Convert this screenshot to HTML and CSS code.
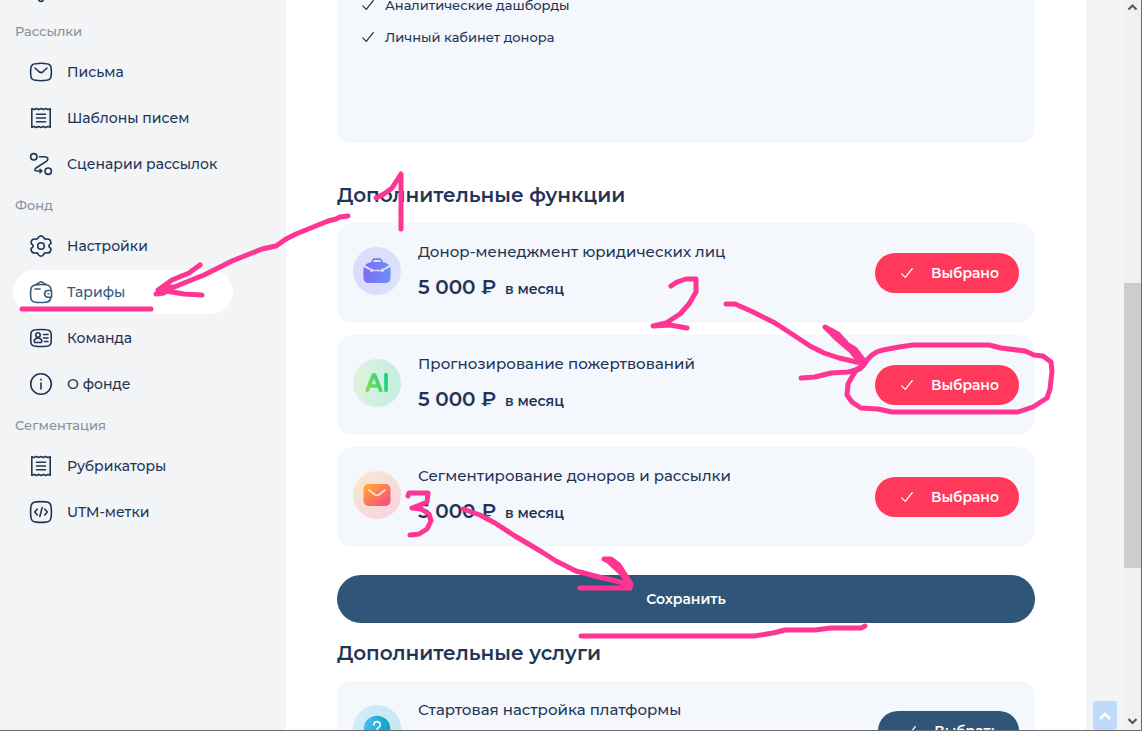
FILE: index.html
```html
<!DOCTYPE html>
<html lang="ru">
<head>
<meta charset="utf-8">
<title>Тарифы</title>
<link rel="stylesheet" href="styles.css">
</head>
<body>
<svg class="defs" aria-hidden="true">
  <defs>
    <linearGradient id="violet" gradientUnits="userSpaceOnUse" x1="11" y1="0" x2="37" y2="0"><stop offset="0" stop-color="#7b6ff5"/><stop offset="1" stop-color="#6e8df2"/></linearGradient>
    <linearGradient id="green" gradientUnits="userSpaceOnUse" x1="12" y1="30" x2="36" y2="20"><stop offset="0" stop-color="#8ede4a"/><stop offset="1" stop-color="#0cce86"/></linearGradient>
    <linearGradient id="orange" x1="0" y1="0" x2="1" y2="1"><stop offset="0" stop-color="#ffb02e"/><stop offset="1" stop-color="#fb4584"/></linearGradient>
    <linearGradient id="cyan" x1="0" y1="0" x2="1" y2="0"><stop offset="0" stop-color="#4cbcf0"/><stop offset="1" stop-color="#08a5c4"/></linearGradient>
    <symbol id="receipt" viewBox="0 0 24 24"><path d="M2.800 2.800v18.400M21.200 2.800v18.400M2.800 2.800l2.300.8 2.300-1 2.300 1 2.300-1 2.300 1 2.300-1 2.300 1 2.300-.8M2.800 21.200l2.300-.8 2.300 1 2.300-1 2.300 1 2.300-1 2.300 1 2.300-1 2.300.8M7.500 8.200h9M7.500 12h9M7.500 15.800h9"/></symbol>
    <symbol id="check" viewBox="0 0 16 16"><path d="M2 9l4 4 8-10"/></symbol>
  </defs>
</svg>
<div class="app">
  <nav class="sidebar">
    <svg class="icon icon-cut" viewBox="0 21 24 3" aria-hidden="true"><circle cx="12" cy="20" r="2.400"/></svg>

    <h2 class="nav-label">Рассылки</h2>
    <ul class="nav-list">
      <li><a class="nav-item" href="#"><svg class="icon" viewBox="0 0 24 24"><path d="M6.500 3.700Q12 2.800 17.500 3.700Q22 4 22.200 8.500Q22.600 12 22.200 15.500Q22 20 17.500 20.300Q12 21.200 6.500 20.300Q2 20 1.800 15.500Q1.400 12 1.800 8.500Q2 4 6.500 3.700zM6 8l4.300 4q1.700 1.200 3.400 0L18 8"/></svg>Письма</a></li>
      <li><a class="nav-item" href="#"><svg class="icon"><use href="#receipt"/></svg>Шаблоны писем</a></li>
      <li><a class="nav-item" href="#"><svg class="icon" viewBox="0 0 24 24"><circle cx="4.800" cy="4.800" r="3.200"/><circle cx="19.200" cy="19.200" r="3.200"/><path d="M10.500 4.800h5.500q4.500.8 2 4L7 16q-2.600 2.600.8 3H13M11 17.300L12.800 19 11 20.700"/></svg>Сценарии рассылок</a></li>
    </ul>

    <h2 class="nav-label">Фонд</h2>
    <ul class="nav-list">
      <li><a class="nav-item" href="#"><svg class="icon" viewBox="0 0 24 24"><circle cx="12" cy="12" r="3.300"/><path d="M9.500 3.300Q12 .4 14.500 3.300Q15.200 5.600 17.600 5Q21 4.500 21.800 7.700Q22.500 9.500 20.600 10.500Q19.200 12 20.600 13.500Q22.500 14.500 21.800 16.300Q21 19.500 17.600 19Q15.200 18.400 14.500 20.700Q12 23.600 9.500 20.700Q8.800 18.400 6.400 19Q3 19.500 2.200 16.300Q1.500 14.500 3.400 13.500Q4.800 12 3.400 10.500Q1.500 9.500 2.200 7.700Q3 4.500 6.400 5Q8.800 5.600 9.500 3.300z"/></svg>Настройки</a></li>
      <li><a class="nav-item nav-item-active" href="#" aria-current="page"><svg class="icon" viewBox="0 0 24 24"><path d="M22 10.500Q22 5 16.500 4.800Q12 4.200 6.500 5Q2 5.500 1.800 10Q1.300 14 1.800 17.500Q2.300 22 6.500 22.200Q12 22.800 17 22.200Q21 22 21.800 17.500M6.500 4.500Q9 4 10.200 2.500Q12 1 13.800 2.500Q15 4 17.500 4.500M6 9h5M22.500 10.500h-3.500q-3.300.2-3.500 3.200q.2 3.300 3.500 3.500h3.500zM19 13.800h.5"/></svg>Тарифы</a></li>
      <li><a class="nav-item" href="#"><svg class="icon" viewBox="0 0 24 24"><path d="M6.500 3.700Q12 3.200 17.500 3.700Q22 4 22.200 8.500V15.500Q22 20 17.500 20.300Q12 20.800 6.500 20.300Q2 20 1.800 15.500V8.500Q2 4 6.500 3.700zM14.500 8.500H19M14.500 12H19M15.500 15.500H19"/><circle cx="9" cy="9" r="2.200"/><path d="M6.500 12.800Q9 11.300 11.500 12.800Q14 15 12 16.500H6Q4 15 6.500 12.800z"/></svg>Команда</a></li>
      <li><a class="nav-item" href="#"><svg class="icon" viewBox="0 0 24 24"><circle cx="12" cy="12" r="10.300"/><path d="M12 11v6M12 7.300v.6"/></svg>О фонде</a></li>
    </ul>

    <h2 class="nav-label">Сегментация</h2>
    <ul class="nav-list">
      <li><a class="nav-item" href="#"><svg class="icon"><use href="#receipt"/></svg>Рубрикаторы</a></li>
      <li><a class="nav-item" href="#"><svg class="icon" viewBox="0 0 24 24"><path d="M7 1.900Q12 1.300 17 1.900Q21.800 2.200 22.100 7Q22.700 12 22.100 17Q21.800 21.800 17 22.100Q12 22.700 7 22.100Q2.200 21.800 1.900 17Q1.300 12 1.900 7Q2.200 2.200 7 1.900zM8.300 9L5.700 12l2.600 3M15.700 9l2.600 3-2.600 3M13.200 7.500l-2.400 9"/></svg>UTM-метки</a></li>
    </ul>
  </nav>

  <main class="content">
    <section class="plan">
      <ul class="features">
        <li class="feature"><svg class="check"><use href="#check"/></svg>Аналитические дашборды</li>
        <li class="feature"><svg class="check"><use href="#check"/></svg>Личный кабинет донора</li>
      </ul>
    </section>

    <h1 class="title">Дополнительные функции</h1>
    <div class="cards">
      <article class="card">
        <svg class="badge badge-violet" viewBox="0 0 48 48" aria-hidden="true"><path d="M10.500 20l7 3.500v1.500h2v-.8h9v.8h2v-1.500l7-3.500q.2 6 0 11q-.5 5-5 5h-17q-4.500 0-5-5q-.2-5 0-11z" fill="url(#violet)"/><path d="M12 18.300q4-3.300 7-3.300h10q3 0 7 3.300l-5.500 3.200h-2v1.200h-9v-1.200h-2z" fill="url(#violet)"/><path d="M19 15.500q.5-3.400 2.500-3.400h5q2 0 2.500 3.400" fill="none" stroke="url(#violet)" stroke-width="1.700"/></svg>
        <div class="info">
          <h3 class="name">Донор-менеджмент юридических лиц</h3>
          <p class="price">5 000 ₽ <span class="period">в месяц</span></p>
        </div>
        <button class="pick" type="button"><svg class="check"><use href="#check"/></svg>Выбрано</button>
      </article>
      <article class="card">
        <svg class="badge badge-green" viewBox="0 0 48 48" aria-hidden="true"><path d="M14.200 31.500L20 17q1-2.200 2 0l5.700 14.500M17 27h8M33 15.500v16" fill="none" stroke="url(#green)" stroke-width="3.600" stroke-linecap="round" stroke-linejoin="round"/></svg>
        <div class="info">
          <h3 class="name">Прогнозирование пожертвований</h3>
          <p class="price">5 000 ₽ <span class="period">в месяц</span></p>
        </div>
        <button class="pick" type="button"><svg class="check"><use href="#check"/></svg>Выбрано</button>
      </article>
      <article class="card">
        <svg class="badge badge-orange" viewBox="0 0 48 48" aria-hidden="true"><rect x="10.500" y="13" width="27" height="22" rx="5" fill="url(#orange)"/><path d="M16 19l6 4.800q2 1.200 4 0l6-4.800" fill="none" stroke="#ffe3da" stroke-width="1.800" stroke-linecap="round"/></svg>
        <div class="info">
          <h3 class="name">Сегментирование доноров и рассылки</h3>
          <p class="price">5 000 ₽ <span class="period">в месяц</span></p>
        </div>
        <button class="pick" type="button"><svg class="check"><use href="#check"/></svg>Выбрано</button>
      </article>
    </div>
    <button class="save" type="button">Сохранить</button>

    <h1 class="title title-services">Дополнительные услуги</h1>
    <div class="cards">
      <article class="card">
        <svg class="badge badge-cyan" viewBox="0 0 48 48" aria-hidden="true"><circle cx="24" cy="24" r="13.300" fill="url(#cyan)"/><path d="M20.800 20q.2-3.300 3.300-3.300q3 .1 3.100 3q0 1.700-1.700 2.800q-1.500 1-1.500 2.700M24 29.500v.5" fill="none" stroke="#e8fbff" stroke-width="1.700" stroke-linecap="round"/></svg>
        <div class="info">
          <h3 class="name">Стартовая настройка платформы</h3>
        </div>
        <button class="pick pick-off" type="button"><svg class="check"><use href="#check"/></svg>Выбрать</button>
      </article>
    </div>
  </main>

  <aside class="gutter">
    <button class="to-top" type="button" aria-label="Наверх"><svg viewBox="0 0 24 24"><path d="M7 15l5-5 5 5"/></svg></button>
  </aside>

  <div class="scrollbar" aria-hidden="true">
    <svg class="arrow" viewBox="0 0 17 17"><path d="M4.500 9.500l4-4 4 4"/></svg>
    <div class="track"><div class="thumb"></div></div>
    <svg class="arrow" viewBox="0 0 17 17"><path d="M4.500 6l4 4 4-4"/></svg>
  </div>

  <svg class="marks" viewBox="0 0 1142 731" aria-hidden="true">
    <path d="M376 198l8-4 8-6 9-14v55"/>
    <path d="M348 216l-8 1-4 2-8 2-32 13-10 5-10 7-14 3-30 12-28 14-20 8-12 5-8 5-8 1M200 265l-11 8-17 7-14 10 14-3M158 290l14 2 12 2 18 1"/>
    <path d="M22 309h129"/>
    <path d="M671 286l6-4 9-3h10v13l-7 12-9 10-14 9-13 3 17-1 17 3"/>
    <path d="M726 304h9l16 7 24 12 20 13 15 10 14 7 15 5 22 5-11-13-14-12-11-11 13 7 9 10 8 5 10 13-5 7-12 3-17 1-16 4-14 1"/>
    <path d="M863 366q8-14 20-16l16-3 14-2h76l12 3 24 3 9 4 9 1 8 6 1 9-2 18-3 9-14 9-15 5H892l-14-3-17-1-9-6-5-7 1-11 5-9 4-6z"/>
    <path d="M408 496l1-3h19l-1 9-7 3-8 3 9 1 8 5 2 7-4 8-8 5-9 1"/>
    <path d="M463 509l17 6 15 8 20 13 27 16 14 9 20 10 23 6 17 4 14 4-9-12-13-12-4-2 7 0 8 6 12 19-1 4h-50"/>
    <path d="M581 636h173l19-3 12-3h30l16-2h30l4-2"/>
  </svg>
</div>
</body>
</html>
```
FILE: styles.css
```css
* { box-sizing: border-box; }
body { margin: 0; background: #f2f4f6; color: #1f3557; font-family: Montserrat, Inter, "Open Sans", sans-serif; font-weight: 500; }
h1, h2, h3, p, ul { margin: 0; padding: 0; }
ul { list-style: none; }
button { border: 0; font: inherit; cursor: pointer; }
.defs { position: absolute; width: 0; height: 0; }

.app {
  position: relative;
  display: grid;
  grid-template-columns: 286px minmax(0, 1fr) 38px 18px;
  grid-template-rows: minmax(0, 1fr);
  height: 100vh;
  overflow: hidden;
  border-bottom: 1px solid #6b6b6d;
}

.sidebar { padding: 0 53px 0 13px; }
.icon { flex: none; display: block; width: 24px; height: 24px; fill: none; stroke: currentColor; stroke-width: 1.6; stroke-linecap: round; stroke-linejoin: round; }
.icon-cut { height: 3px; margin: 0 0 9px 16px; }
.nav-label { padding: 0 2px; font-size: 13px; line-height: 38px; font-weight: 500; color: #86929f; }
.nav-list { display: grid; gap: 2px; }
.nav-item { display: flex; align-items: center; gap: 14px; height: 44px; padding: 0 14px 0 16px; border-radius: 22px; font-size: 14px; white-space: nowrap; color: inherit; text-decoration: none; }
.nav-item-active { background: #fff; color: #345a7c; }

.content { padding: 0 51px; background: #fff; }
.plan { display: flex; align-items: flex-start; height: 143px; padding: 0 24px; border-radius: 0 0 16px 16px; background: #f4f7fc; }
.features { margin-top: -11px; }
.feature { display: flex; align-items: center; gap: 10px; font-size: 13px; line-height: 32px; }
.check { flex: none; width: 14px; height: 14px; fill: none; stroke: currentColor; stroke-width: 1.5; stroke-linecap: round; stroke-linejoin: round; }
.title { padding: 36px 0 12px; font-size: 20px; line-height: 32px; font-weight: 600; }
.title-services { padding-top: 14px; }
.cards { display: grid; gap: 12px; }
.card { display: flex; align-items: center; gap: 17px; min-height: 100px; padding: 16px; border-radius: 16px; background: #f4f7fc; }
.badge { flex: none; align-self: flex-start; width: 48px; height: 48px; margin-top: 8px; border-radius: 50%; }
.badge-violet { background: linear-gradient(90deg, #dcdafb, #dae3fb); }
.badge-green { background: linear-gradient(90deg, #dff2dc, #c2efe2); }
.badge-orange { background: linear-gradient(135deg, #f7e9cf, #f7d3e0); }
.badge-cyan { background: linear-gradient(90deg, #d3edfb, #c4e8f1); }
.info { flex: 1; align-self: flex-start; display: grid; gap: 8px; }
.name { font-size: 15px; line-height: 26px; font-weight: 500; }
.price { font-size: 20px; line-height: 28px; font-weight: 600; }
.period { margin-left: 3px; font-size: 14px; }
.pick { display: flex; align-items: center; justify-content: flex-end; gap: 17px; min-width: 144px; height: 40px; padding: 0 20px; border-radius: 20px; background: #ff385c; color: #fff; font-size: 14px; font-weight: 600; }
.pick-off { min-width: 141px; background: #2f5678; }
.save { display: block; width: 100%; height: 48px; margin-top: 28px; border-radius: 24px; background: #2f5678; color: #fff; font-size: 14px; font-weight: 600; }

.gutter { display: flex; align-items: flex-end; justify-content: center; }
.to-top { width: 24px; height: 29px; padding: 0; border-radius: 3px; background: #bfdbf9; }
.to-top svg { display: block; width: 24px; height: 24px; fill: none; stroke: #fff; stroke-width: 2.5; }

.scrollbar { display: flex; flex-direction: column; border-right: 1px solid #6b6b6d; background: #f0f0f0; }
.arrow { flex: none; width: 17px; height: 17px; fill: none; stroke: #58595b; stroke-width: 2.2; }
.track { flex: 1; display: grid; grid-template-rows: 266fr 285fr 145fr; }
.thumb { grid-row: 2; background: #cdcdcd; }

.marks { position: absolute; top: 0; left: 0; width: 1142px; height: 731px; fill: none; stroke: #ff3594; stroke-width: 5; stroke-linecap: round; stroke-linejoin: round; pointer-events: none; }
```
